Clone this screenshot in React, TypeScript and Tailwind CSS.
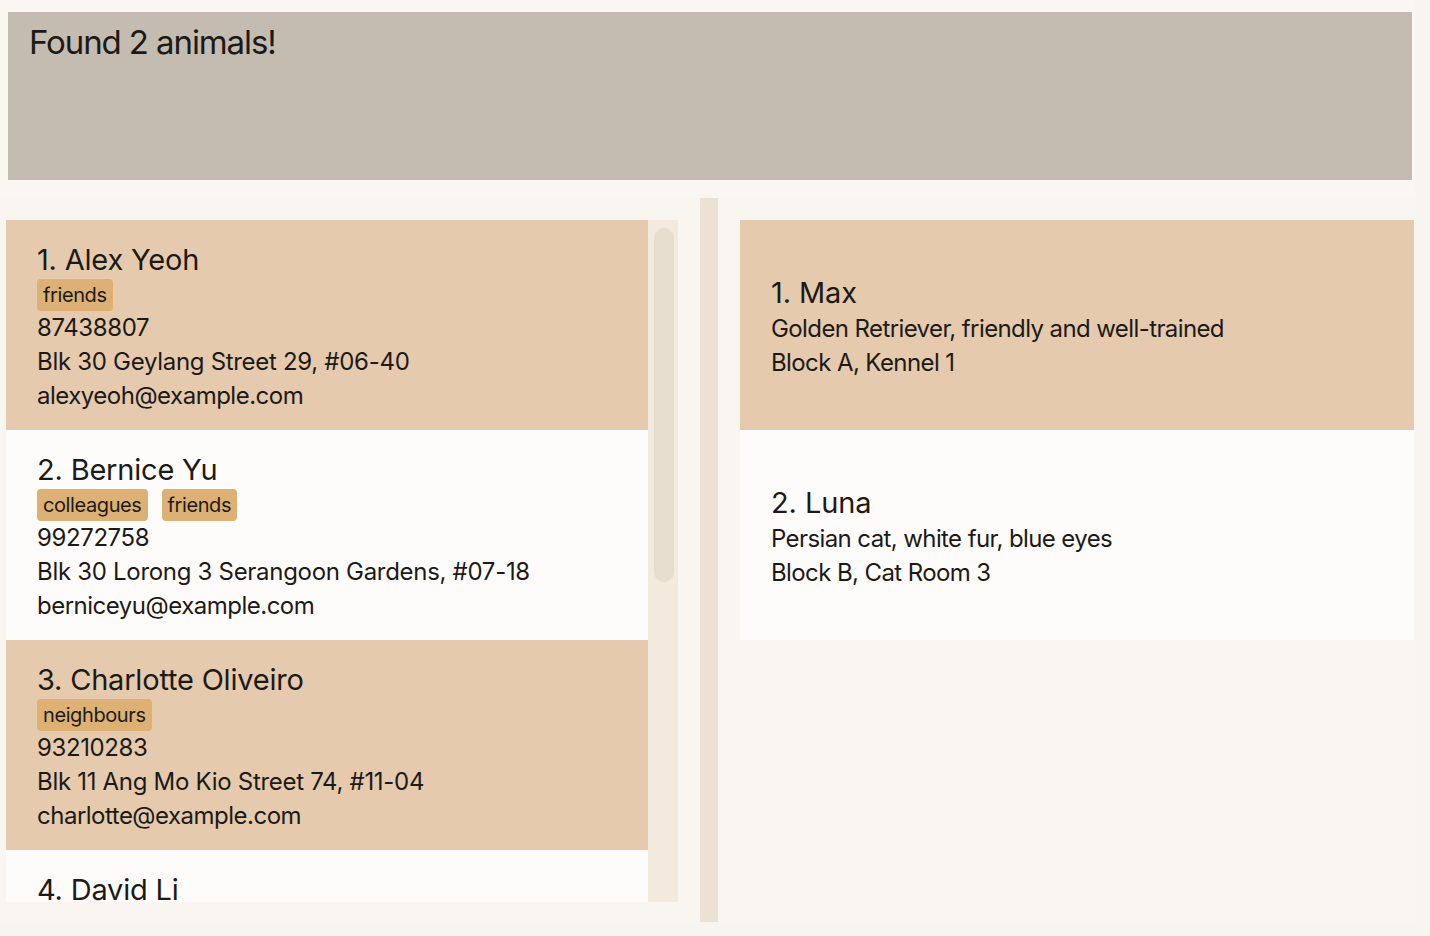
const persons = [
  {
    name: 'Alex Yeoh',
    tags: ['friends'],
    phone: '87438807',
    address: 'Blk 30 Geylang Street 29, #06-40',
    email: 'alexyeoh@example.com',
  },
  {
    name: 'Bernice Yu',
    tags: ['colleagues', 'friends'],
    phone: '99272758',
    address: 'Blk 30 Lorong 3 Serangoon Gardens, #07-18',
    email: 'berniceyu@example.com',
  },
  {
    name: 'Charlotte Oliveiro',
    tags: ['neighbours'],
    phone: '93210283',
    address: 'Blk 11 Ang Mo Kio Street 74, #11-04',
    email: 'charlotte@example.com',
  },
  {
    name: 'David Li',
    tags: ['family'],
    phone: '91031282',
    address: 'Blk 436 Serangoon Gardens Street 26, #16-43',
    email: 'lidavid@example.com',
  },
];

const animals = [
  { name: 'Max', desc: 'Golden Retriever, friendly and well-trained', location: 'Block A, Kennel 1' },
  { name: 'Luna', desc: 'Persian cat, white fur, blue eyes', location: 'Block B, Cat Room 3' },
];

export default function App() {
  return (
    <div
      className="w-[1430px] h-[936px] bg-[#f8f5f0] text-[#1c1a17] flex flex-col overflow-hidden"
      style={{ fontFamily: 'Inter, "Noto Sans", sans-serif' }}
    >
      {/* Result display */}
      <div className="w-[1415px] h-[194px] shrink-0 bg-[#faf7f3] pt-3 pl-2">
        <div className="w-[1404px] h-[168px] bg-[#c4bcb0] px-[21px] pt-[7px]">
          <p className="text-[33px] leading-[46px] tracking-[-1.1px]">Found 2 animals!</p>
        </div>
      </div>

      {/* Lists */}
      <div className="w-[1415px] h-[728px] shrink-0 flex bg-[#f9f6f2]">
        <div className="pl-[6px] pt-[26px]">
          <div className="flex h-[682px]">
            <div className="w-[642px] h-full overflow-hidden">
              {persons.map((p, i) => (
                <div
                  key={p.name}
                  className={`h-[210px] px-[31px] pt-[21px] ${i % 2 === 0 ? 'bg-[#e5caad]' : 'bg-[#fefcfa]'}`}
                >
                  <div className="text-[29px] leading-[38px] tracking-[-0.2px]">
                    {i + 1}. {p.name}
                  </div>
                  <div className="flex gap-[14px] h-[32px]">
                    {p.tags.map(t => (
                      <span
                        key={t}
                        className="bg-[#dcb173] rounded-[4px] px-[6px] text-[20px] leading-[32px] tracking-[-0.4px]"
                      >
                        {t}
                      </span>
                    ))}
                  </div>
                  <div className="text-[24px] leading-[34px] tracking-[-0.4px]">{p.phone}</div>
                  <div className="text-[24px] leading-[34px] tracking-[-0.3px]">{p.address}</div>
                  <div className="text-[24px] leading-[34px] tracking-[-0.5px]">{p.email}</div>
                </div>
              ))}
            </div>
            <div className="w-[30px] h-full bg-[#f3e9dc] pl-[6px] pt-[8px]">
              <div className="w-[20px] h-[354px] rounded-full bg-[#e5ddcd]" />
            </div>
          </div>
        </div>

        <div className="ml-[22px] pt-[4px]">
          <div className="w-[18px] h-[726px] bg-[#ede1d6]" />
        </div>

        <div className="ml-[22px] pt-[26px]">
          {animals.map((a, i) => (
            <div
              key={a.name}
              className={`w-[674px] h-[210px] px-[31px] pt-[4px] flex flex-col justify-center ${i % 2 === 0 ? 'bg-[#e5caad]' : 'bg-[#fefcfa]'}`}
            >
              <div className="text-[29px] leading-[38px] tracking-[-0.1px]">
                {i + 1}. {a.name}
              </div>
              <div className="text-[24px] leading-[34px] tracking-[-0.6px]">{a.desc}</div>
              <div className="text-[24px] leading-[34px] tracking-[-0.6px]">{a.location}</div>
            </div>
          ))}
        </div>
      </div>

      <div className="flex-1 bg-[#f8f5f0]" />
    </div>
  );
}
